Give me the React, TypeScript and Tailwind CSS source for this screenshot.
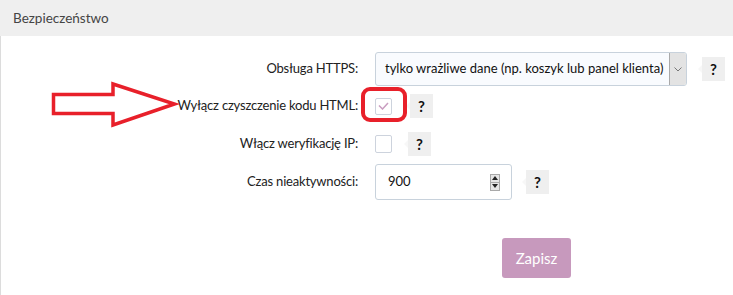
import React from "react";

function Help() {
  return (
    <div className="relative flex h-[24px] w-[23px] items-center justify-center bg-[#efefef] text-[15px] font-bold text-[#111]">
      <span className="absolute left-[-4px] top-[8px] h-0 w-0 border-y-[4px] border-r-[4px] border-y-transparent border-r-[#f7f7f7]" />
      ?
    </div>
  );
}

function Row({ label, h, children }: { label: string; h: string; children: React.ReactNode }) {
  return (
    <div className={`flex items-center ${h}`}>
      <div className="w-[357px] whitespace-nowrap text-right text-[13px] tracking-[-0.2px] text-[#222]">{label}</div>
      <div className="ml-[17px] flex items-center">{children}</div>
    </div>
  );
}

export default function App() {
  return (
    <div
      className="relative h-[295px] w-[733px] overflow-hidden bg-white"
      style={{ fontFamily: 'Lato, "Noto Sans", sans-serif' }}
    >
      <div className="flex h-[36px] items-center bg-[#efefef] pl-[13px] text-[13.5px] text-[#444]">
        Bezpieczeństwo
      </div>
      <div className="h-[259px] border-l border-[#dcdcdc] pt-[16px]">
        <Row label="Obsługa HTTPS:" h="h-[34px]">
          <div className="flex h-[34px] w-[312px] items-stretch overflow-hidden rounded-[3px] border border-[#c8d2dc] bg-[#f9fbfe]">
            <div className="flex min-w-0 flex-1 items-center overflow-hidden whitespace-nowrap pl-[9px] text-[13px] text-[#111]">
              tylko wrażliwe dane (np. koszyk lub panel klienta)
            </div>
            <div className="flex w-[17px] shrink-0 items-center justify-center border-l border-[#a9a9a9] bg-[#e3e3e3]">
              <svg width="8" height="5" viewBox="0 0 8 5">
                <path d="M0.5 0.5 L4 4 L7.5 0.5" fill="none" stroke="#777" strokeWidth="1" />
              </svg>
            </div>
          </div>
          <div className="ml-[15px]">
            <Help />
          </div>
        </Row>
        <div className="h-[5px]" />
        <Row label="Wyłącz czyszczenie kodu HTML:" h="h-[30px]">
          <div className="flex h-[17px] w-[17px] items-center justify-center rounded-[2px] border border-[#cdd3dd] bg-white">
            <svg width="11" height="8" viewBox="0 0 11 8">
              <path d="M1 3.5 L4.5 7 L10 1" fill="none" stroke="#c99dc0" strokeWidth="1.5" />
            </svg>
          </div>
          <div className="ml-[18px]">
            <Help />
          </div>
        </Row>
        <div className="h-[9px]" />
        <Row label="Włącz weryfikację IP:" h="h-[28px]">
          <div className="h-[18px] w-[17px] rounded-[2px] border border-[#cdd3dd] bg-white" />
          <div className="ml-[16px]">
            <Help />
          </div>
        </Row>
        <div className="h-[6px]" />
        <Row label="Czas nieaktywności:" h="h-[36px]">
          <div className="flex h-[36px] w-[137px] items-center rounded-[3px] border border-[#c8d2dc] bg-white pl-[12px] pr-[11px]">
            <span className="flex-1 text-[13px] text-[#111]">900</span>
            <div className="flex h-[17px] w-[10px] flex-col border border-[#a9a9a9] bg-[#e6e6e6]">
              <div className="flex flex-1 items-center justify-center border-b border-[#a9a9a9]">
                <span className="h-0 w-0 border-x-[3px] border-b-[4px] border-x-transparent border-b-[#222]" />
              </div>
              <div className="flex flex-1 items-center justify-center">
                <span className="h-0 w-0 border-x-[3px] border-t-[4px] border-x-transparent border-t-[#222]" />
              </div>
            </div>
          </div>
          <div className="ml-[14px]">
            <Help />
          </div>
        </Row>
        <div className="ml-[501px] mt-[38px] flex h-[40px] w-[69px] items-center justify-center rounded-[3px] bg-[#c799bd] text-[15px] text-white">
          Zapisz
        </div>
      </div>

      {/* red annotations */}
      <div className="absolute left-[361px] top-[87px] h-[35px] w-[46px] rounded-[9px] border-[4px] border-[#e8202a]" />
      <svg className="absolute left-[50px] top-[81px]" width="130" height="48" viewBox="0 0 130 48">
        <path
          d="M3.5 13.5 L63 13.5 L63 3 L124.5 23 L63 44 L63 32.5 L3.5 32.5 Z"
          fill="none"
          stroke="#e8202a"
          strokeWidth="3.5"
          strokeLinejoin="miter"
        />
      </svg>
    </div>
  );
}
